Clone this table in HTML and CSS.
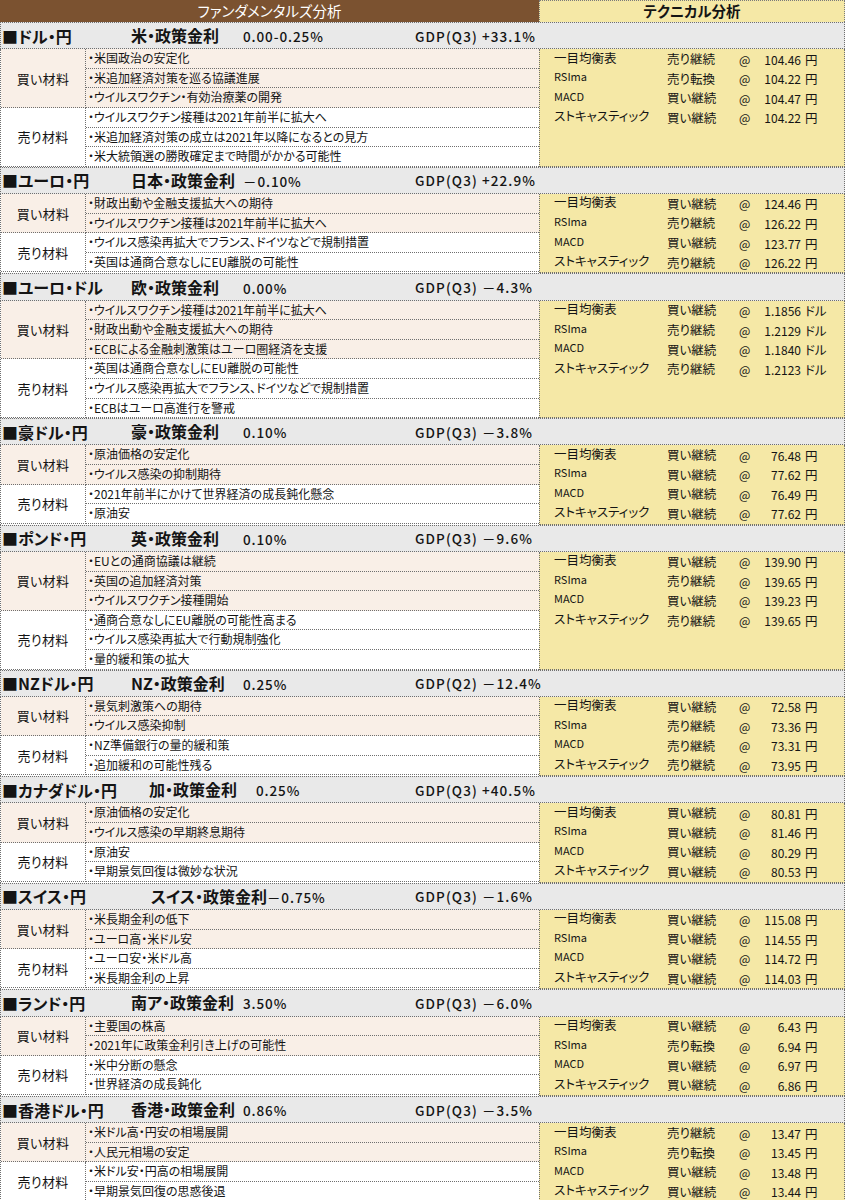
FILE: index.html
```html
<!DOCTYPE html>
<html lang="ja">
<head>
<meta charset="utf-8">
<title>ファンダメンタルズ分析 / テクニカル分析</title>
<link rel="stylesheet" href="styles.css">
</head>
<body>
<div class="sheet">
  <div class="top">
    <div class="top-f">ファンダメンタルズ分析</div>
    <div class="top-t">テクニカル分析</div>
  </div>

  <section class="pair">
    <div class="head">
      <span class="ccy">■ドル・円</span>
      <span class="rate"><span class="rate-name">米・政策金利</span><span class="rate-val">0.00-0.25%</span></span>
      <span class="gdp">GDP(Q3) +33.1%</span>
    </div>
    <div class="body">
      <div class="fund">
        <div class="grp buy"><div class="lbl">買い材料</div><ul class="items"><li>・米国政治の安定化</li><li>・米追加経済対策を巡る協議進展</li><li>・ウイルスワクチン・有効治療薬の開発</li></ul></div>
        <div class="grp sell"><div class="lbl">売り材料</div><ul class="items"><li>・ウイルスワクチン接種は2021年前半に拡大へ</li><li>・米追加経済対策の成立は2021年以降になるとの見方</li><li>・米大統領選の勝敗確定まで時間がかかる可能性</li></ul></div>
      </div>
      <div class="tech">
        <div class="trow"><span class="ind">一目均衡表</span><span class="sig">売り継続</span><span class="at">@</span><span class="px">104.46</span><span class="unit">円</span></div>
        <div class="trow"><span class="ind lat">RSIma</span><span class="sig">売り転換</span><span class="at">@</span><span class="px">104.22</span><span class="unit">円</span></div>
        <div class="trow"><span class="ind lat">MACD</span><span class="sig">買い継続</span><span class="at">@</span><span class="px">104.47</span><span class="unit">円</span></div>
        <div class="trow"><span class="ind">ストキャスティック</span><span class="sig">買い継続</span><span class="at">@</span><span class="px">104.22</span><span class="unit">円</span></div>
      </div>
    </div>
  </section>

  <section class="pair">
    <div class="head">
      <span class="ccy">■ユーロ・円</span>
      <span class="rate"><span class="rate-name">日本・政策金利</span><span class="rate-val">－0.10%</span></span>
      <span class="gdp">GDP(Q3) +22.9%</span>
    </div>
    <div class="body">
      <div class="fund">
        <div class="grp buy"><div class="lbl">買い材料</div><ul class="items"><li>・財政出動や金融支援拡大への期待</li><li>・ウイルスワクチン接種は2021年前半に拡大へ</li></ul></div>
        <div class="grp sell"><div class="lbl">売り材料</div><ul class="items"><li>・ウイルス感染再拡大でフランス、ドイツなどで規制措置</li><li>・英国は通商合意なしにEU離脱の可能性</li></ul></div>
      </div>
      <div class="tech">
        <div class="trow"><span class="ind">一目均衡表</span><span class="sig">買い継続</span><span class="at">@</span><span class="px">124.46</span><span class="unit">円</span></div>
        <div class="trow"><span class="ind lat">RSIma</span><span class="sig">売り継続</span><span class="at">@</span><span class="px">126.22</span><span class="unit">円</span></div>
        <div class="trow"><span class="ind lat">MACD</span><span class="sig">買い継続</span><span class="at">@</span><span class="px">123.77</span><span class="unit">円</span></div>
        <div class="trow"><span class="ind">ストキャスティック</span><span class="sig">売り継続</span><span class="at">@</span><span class="px">126.22</span><span class="unit">円</span></div>
      </div>
    </div>
  </section>

  <section class="pair">
    <div class="head">
      <span class="ccy">■ユーロ・ドル</span>
      <span class="rate"><span class="rate-name">欧・政策金利</span><span class="rate-val">0.00%</span></span>
      <span class="gdp">GDP(Q3) －4.3%</span>
    </div>
    <div class="body">
      <div class="fund">
        <div class="grp buy"><div class="lbl">買い材料</div><ul class="items"><li>・ウイルスワクチン接種は2021年前半に拡大へ</li><li>・財政出動や金融支援拡大への期待</li><li>・ECBによる金融刺激策はユーロ圏経済を支援</li></ul></div>
        <div class="grp sell"><div class="lbl">売り材料</div><ul class="items"><li>・英国は通商合意なしにEU離脱の可能性</li><li>・ウイルス感染再拡大でフランス、ドイツなどで規制措置</li><li>・ECBはユーロ高進行を警戒</li></ul></div>
      </div>
      <div class="tech">
        <div class="trow"><span class="ind">一目均衡表</span><span class="sig">買い継続</span><span class="at">@</span><span class="px">1.1856</span><span class="unit">ドル</span></div>
        <div class="trow"><span class="ind lat">RSIma</span><span class="sig">売り継続</span><span class="at">@</span><span class="px">1.2129</span><span class="unit">ドル</span></div>
        <div class="trow"><span class="ind lat">MACD</span><span class="sig">買い継続</span><span class="at">@</span><span class="px">1.1840</span><span class="unit">ドル</span></div>
        <div class="trow"><span class="ind">ストキャスティック</span><span class="sig">売り継続</span><span class="at">@</span><span class="px">1.2123</span><span class="unit">ドル</span></div>
      </div>
    </div>
  </section>

  <section class="pair">
    <div class="head">
      <span class="ccy">■豪ドル・円</span>
      <span class="rate"><span class="rate-name">豪・政策金利</span><span class="rate-val">0.10%</span></span>
      <span class="gdp">GDP(Q3) －3.8%</span>
    </div>
    <div class="body">
      <div class="fund">
        <div class="grp buy"><div class="lbl">買い材料</div><ul class="items"><li>・原油価格の安定化</li><li>・ウイルス感染の抑制期待</li></ul></div>
        <div class="grp sell"><div class="lbl">売り材料</div><ul class="items"><li>・2021年前半にかけて世界経済の成長鈍化懸念</li><li>・原油安</li></ul></div>
      </div>
      <div class="tech">
        <div class="trow"><span class="ind">一目均衡表</span><span class="sig">買い継続</span><span class="at">@</span><span class="px">76.48</span><span class="unit">円</span></div>
        <div class="trow"><span class="ind lat">RSIma</span><span class="sig">買い継続</span><span class="at">@</span><span class="px">77.62</span><span class="unit">円</span></div>
        <div class="trow"><span class="ind lat">MACD</span><span class="sig">買い継続</span><span class="at">@</span><span class="px">76.49</span><span class="unit">円</span></div>
        <div class="trow"><span class="ind">ストキャスティック</span><span class="sig">買い継続</span><span class="at">@</span><span class="px">77.62</span><span class="unit">円</span></div>
      </div>
    </div>
  </section>

  <section class="pair">
    <div class="head">
      <span class="ccy">■ポンド・円</span>
      <span class="rate"><span class="rate-name">英・政策金利</span><span class="rate-val">0.10%</span></span>
      <span class="gdp">GDP(Q3) －9.6%</span>
    </div>
    <div class="body">
      <div class="fund">
        <div class="grp buy"><div class="lbl">買い材料</div><ul class="items"><li>・EUとの通商協議は継続</li><li>・英国の追加経済対策</li><li>・ウイルスワクチン接種開始</li></ul></div>
        <div class="grp sell"><div class="lbl">売り材料</div><ul class="items"><li>・通商合意なしにEU離脱の可能性高まる</li><li>・ウイルス感染再拡大で行動規制強化</li><li>・量的緩和策の拡大</li></ul></div>
      </div>
      <div class="tech">
        <div class="trow"><span class="ind">一目均衡表</span><span class="sig">買い継続</span><span class="at">@</span><span class="px">139.90</span><span class="unit">円</span></div>
        <div class="trow"><span class="ind lat">RSIma</span><span class="sig">売り継続</span><span class="at">@</span><span class="px">139.65</span><span class="unit">円</span></div>
        <div class="trow"><span class="ind lat">MACD</span><span class="sig">買い継続</span><span class="at">@</span><span class="px">139.23</span><span class="unit">円</span></div>
        <div class="trow"><span class="ind">ストキャスティック</span><span class="sig">売り継続</span><span class="at">@</span><span class="px">139.65</span><span class="unit">円</span></div>
      </div>
    </div>
  </section>

  <section class="pair">
    <div class="head">
      <span class="ccy">■NZドル・円</span>
      <span class="rate"><span class="rate-name">NZ・政策金利</span><span class="rate-val">0.25%</span></span>
      <span class="gdp">GDP(Q2) －12.4%</span>
    </div>
    <div class="body">
      <div class="fund">
        <div class="grp buy"><div class="lbl">買い材料</div><ul class="items"><li>・景気刺激策への期待</li><li>・ウイルス感染抑制</li></ul></div>
        <div class="grp sell"><div class="lbl">売り材料</div><ul class="items"><li>・NZ準備銀行の量的緩和策</li><li>・追加緩和の可能性残る</li></ul></div>
      </div>
      <div class="tech">
        <div class="trow"><span class="ind">一目均衡表</span><span class="sig">買い継続</span><span class="at">@</span><span class="px">72.58</span><span class="unit">円</span></div>
        <div class="trow"><span class="ind lat">RSIma</span><span class="sig">売り継続</span><span class="at">@</span><span class="px">73.36</span><span class="unit">円</span></div>
        <div class="trow"><span class="ind lat">MACD</span><span class="sig">売り継続</span><span class="at">@</span><span class="px">73.31</span><span class="unit">円</span></div>
        <div class="trow"><span class="ind">ストキャスティック</span><span class="sig">売り継続</span><span class="at">@</span><span class="px">73.95</span><span class="unit">円</span></div>
      </div>
    </div>
  </section>

  <section class="pair">
    <div class="head">
      <span class="ccy">■カナダドル・円</span>
      <span class="rate rate--wide"><span class="rate-name">加・政策金利</span><span class="rate-val">0.25%</span></span>
      <span class="gdp">GDP(Q3) +40.5%</span>
    </div>
    <div class="body">
      <div class="fund">
        <div class="grp buy"><div class="lbl">買い材料</div><ul class="items"><li>・原油価格の安定化</li><li>・ウイルス感染の早期終息期待</li></ul></div>
        <div class="grp sell"><div class="lbl">売り材料</div><ul class="items"><li>・原油安</li><li>・早期景気回復は微妙な状況</li></ul></div>
      </div>
      <div class="tech">
        <div class="trow"><span class="ind">一目均衡表</span><span class="sig">買い継続</span><span class="at">@</span><span class="px">80.81</span><span class="unit">円</span></div>
        <div class="trow"><span class="ind lat">RSIma</span><span class="sig">買い継続</span><span class="at">@</span><span class="px">81.46</span><span class="unit">円</span></div>
        <div class="trow"><span class="ind lat">MACD</span><span class="sig">買い継続</span><span class="at">@</span><span class="px">80.29</span><span class="unit">円</span></div>
        <div class="trow"><span class="ind">ストキャスティック</span><span class="sig">買い継続</span><span class="at">@</span><span class="px">80.53</span><span class="unit">円</span></div>
      </div>
    </div>
  </section>

  <section class="pair">
    <div class="head">
      <span class="ccy">■スイス・円</span>
      <span class="rate rate--shift"><span class="rate-name">スイス・政策金利</span><span class="rate-val">－0.75%</span></span>
      <span class="gdp">GDP(Q3) －1.6%</span>
    </div>
    <div class="body">
      <div class="fund">
        <div class="grp buy"><div class="lbl">買い材料</div><ul class="items"><li>・米長期金利の低下</li><li>・ユーロ高・米ドル安</li></ul></div>
        <div class="grp sell"><div class="lbl">売り材料</div><ul class="items"><li>・ユーロ安・米ドル高</li><li>・米長期金利の上昇</li></ul></div>
      </div>
      <div class="tech">
        <div class="trow"><span class="ind">一目均衡表</span><span class="sig">買い継続</span><span class="at">@</span><span class="px">115.08</span><span class="unit">円</span></div>
        <div class="trow"><span class="ind lat">RSIma</span><span class="sig">買い継続</span><span class="at">@</span><span class="px">114.55</span><span class="unit">円</span></div>
        <div class="trow"><span class="ind lat">MACD</span><span class="sig">買い継続</span><span class="at">@</span><span class="px">114.72</span><span class="unit">円</span></div>
        <div class="trow"><span class="ind">ストキャスティック</span><span class="sig">買い継続</span><span class="at">@</span><span class="px">114.03</span><span class="unit">円</span></div>
      </div>
    </div>
  </section>

  <section class="pair">
    <div class="head">
      <span class="ccy">■ランド・円</span>
      <span class="rate"><span class="rate-name">南ア・政策金利</span><span class="rate-val">3.50%</span></span>
      <span class="gdp">GDP(Q3) －6.0%</span>
    </div>
    <div class="body">
      <div class="fund">
        <div class="grp buy"><div class="lbl">買い材料</div><ul class="items"><li>・主要国の株高</li><li>・2021年に政策金利引き上げの可能性</li></ul></div>
        <div class="grp sell"><div class="lbl">売り材料</div><ul class="items"><li>・米中分断の懸念</li><li>・世界経済の成長鈍化</li></ul></div>
      </div>
      <div class="tech">
        <div class="trow"><span class="ind">一目均衡表</span><span class="sig">買い継続</span><span class="at">@</span><span class="px">6.43</span><span class="unit">円</span></div>
        <div class="trow"><span class="ind lat">RSIma</span><span class="sig">売り転換</span><span class="at">@</span><span class="px">6.94</span><span class="unit">円</span></div>
        <div class="trow"><span class="ind lat">MACD</span><span class="sig">買い継続</span><span class="at">@</span><span class="px">6.97</span><span class="unit">円</span></div>
        <div class="trow"><span class="ind">ストキャスティック</span><span class="sig">買い継続</span><span class="at">@</span><span class="px">6.86</span><span class="unit">円</span></div>
      </div>
    </div>
  </section>

  <section class="pair">
    <div class="head">
      <span class="ccy">■香港ドル・円</span>
      <span class="rate"><span class="rate-name">香港・政策金利</span><span class="rate-val">0.86%</span></span>
      <span class="gdp">GDP(Q3) －3.5%</span>
    </div>
    <div class="body">
      <div class="fund">
        <div class="grp buy"><div class="lbl">買い材料</div><ul class="items"><li>・米ドル高・円安の相場展開</li><li>・人民元相場の安定</li></ul></div>
        <div class="grp sell"><div class="lbl">売り材料</div><ul class="items"><li>・米ドル安・円高の相場展開</li><li>・早期景気回復の思惑後退</li></ul></div>
      </div>
      <div class="tech">
        <div class="trow"><span class="ind">一目均衡表</span><span class="sig">売り継続</span><span class="at">@</span><span class="px">13.47</span><span class="unit">円</span></div>
        <div class="trow"><span class="ind lat">RSIma</span><span class="sig">売り転換</span><span class="at">@</span><span class="px">13.45</span><span class="unit">円</span></div>
        <div class="trow"><span class="ind lat">MACD</span><span class="sig">買い継続</span><span class="at">@</span><span class="px">13.48</span><span class="unit">円</span></div>
        <div class="trow"><span class="ind">ストキャスティック</span><span class="sig">買い継続</span><span class="at">@</span><span class="px">13.44</span><span class="unit">円</span></div>
      </div>
    </div>
  </section>
</div>
</body>
</html>
```

FILE: styles.css
```css
* {
  box-sizing: border-box;
  margin: 0;
  padding: 0;
}

body {
  margin: 0;
  background: #ffffff;
  color: #141414;
  font-family: "Noto Sans CJK JP", "Noto Sans", sans-serif;
  font-feature-settings: "palt";
}

.sheet {
  width: 845px;
}

.top {
  display: grid;
  grid-template-columns: 539px 306px;
  height: 22px;
}

.top-f {
  background: #7b5230;
  color: #ffffff;
  font-size: 14.5px;
  line-height: 22px;
  text-align: center;
}

.top-t {
  background: #f5e8a6;
  border: 1px dotted #7a7a7a;
  border-bottom: none;
  font-size: 14.5px;
  font-weight: 700;
  line-height: 20px;
  text-align: center;
}

.head {
  display: grid;
  grid-template-columns: 130px 284px 1fr;
  align-items: center;
  height: 27.3px;
  background: #e9e9e9;
  border: 1px dotted #6f6f6f;
  white-space: nowrap;
}

.ccy {
  padding-left: 1px;
  font-size: 16px;
  font-weight: 700;
  line-height: 20px;
}

.rate {
  display: flex;
  align-items: baseline;
}

.rate-name {
  min-width: 112px;
  font-size: 16px;
  font-weight: 700;
  line-height: 20px;
}

.rate-val,
.gdp {
  font-size: 13.5px;
  font-weight: 500;
  line-height: 20px;
}

.rate-val {
  letter-spacing: 0.9px;
}

.gdp {
  letter-spacing: 1.1px;
}

.rate--wide {
  padding-left: 18px;
}

.rate--wide .rate-name {
  min-width: 107px;
}

.rate--shift {
  padding-left: 20px;
}

.body {
  display: grid;
  grid-template-columns: 539px 306px;
}

.fund {
  border-left: 1px dotted #6f6f6f;
}

.grp {
  display: grid;
  grid-template-columns: 85px 1fr;
}

.buy {
  background: #f9efe7;
}

.sell {
  background: #ffffff;
}

.lbl {
  display: flex;
  align-items: center;
  justify-content: center;
  border-right: 1px dotted #6f6f6f;
  border-bottom: 1px dotted #6f6f6f;
  font-size: 13px;
  letter-spacing: 0.3px;
}

.items {
  list-style: none;
}

.items li {
  height: 19.58px;
  padding-left: 2px;
  border-bottom: 1px dotted #6f6f6f;
  font-size: 12px;
  line-height: 18.5px;
  white-space: nowrap;
}

.tech {
  background: #f5e8a6;
  border-left: 1px dotted #6f6f6f;
  border-right: 1px dotted #6f6f6f;
  border-bottom: 1px dotted #6f6f6f;
}

.trow {
  display: grid;
  grid-template-columns: 113px 72px 20px 42px auto;
  align-items: center;
  height: 19.58px;
  padding-left: 14px;
  font-size: 12px;
  white-space: nowrap;
}

.ind {
  padding-bottom: 4px;
  font-size: 12.5px;
  line-height: 15px;
}

.ind.lat {
  font-size: 11px;
}

.sig {
  font-size: 12.5px;
  line-height: 16px;
}

.at {
  font-size: 12px;
}

.px {
  text-align: right;
  font-size: 12px;
}

.unit {
  padding-left: 4px;
  font-size: 12.5px;
}
```
